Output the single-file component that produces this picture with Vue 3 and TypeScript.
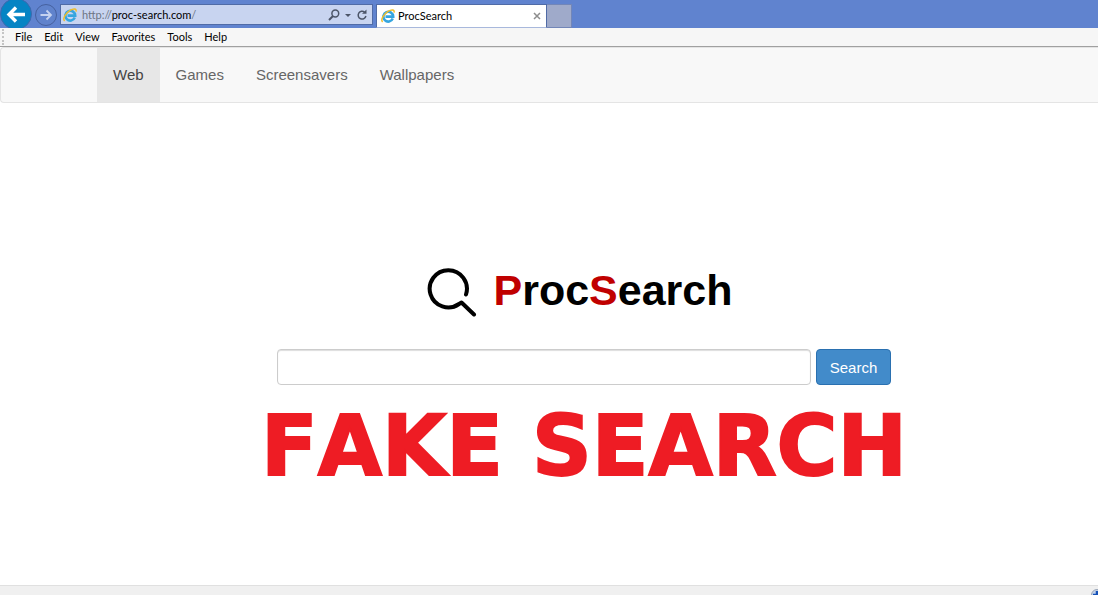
<script setup lang="ts">
import { ref } from 'vue'

const menus: string[] = ['File', 'Edit', 'View', 'Favorites', 'Tools', 'Help']
const links: string[] = ['Web', 'Games', 'Screensavers', 'Wallpapers']
const active = ref<string>('Web')
const query = ref<string>('')
</script>

<template>
  <div class="browser">
    <svg class="defs" aria-hidden="true">
      <symbol id="ie-logo" viewBox="0 0 14 14">
        <path d="M11.8 9.6A4.900 4.900 0 1 1 12.200 7.600H4.500" fill="none" stroke="#35a5df" stroke-width="2.600" />
        <path d="M1.600 13C-.8 10.800 2.800 5.100 7 2.400 10.400.3 13.800.2 13 3.600" fill="none" stroke="#efbd2b" stroke-width="1.500" />
      </symbol>
    </svg>

    <header class="titlebar">
      <button class="back" aria-label="Back">
        <svg viewBox="0 0 32 32" width="32" height="32">
          <circle cx="16" cy="14" r="15.500" fill="#0584c4" stroke="#3f68ad" />
          <path d="M25 14.500H9M16 7.500l-7 7 7 7" fill="none" stroke="#fff" stroke-width="3.400" />
        </svg>
      </button>
      <button class="forward" aria-label="Forward">
        <svg viewBox="0 0 24 24" width="24" height="24">
          <circle cx="12" cy="12" r="10.500" fill="#6083cc" stroke="#46619f" />
          <path d="M6.500 12H17M12.500 7.500L17 12l-4.500 4.500" fill="none" stroke="#c5d3f0" stroke-width="1.800" />
        </svg>
      </button>
      <div class="address">
        <svg class="ie" width="14" height="14"><use href="#ie-logo" /></svg>
        <span class="url">http://<b>proc-search.com</b>/</span>
        <button aria-label="Search the address">
          <svg viewBox="0 0 12 12" width="12" height="12"><circle cx="7.300" cy="4.500" r="3.400" /><path d="M5 7L1 11" stroke-width="2" /></svg>
        </button>
        <button aria-label="Show addresses">
          <svg viewBox="0 0 6 12" width="6" height="12"><path d="M0 5h6L3 8z" class="solid" /></svg>
        </button>
        <button aria-label="Refresh">
          <svg viewBox="0 0 12 12" width="12" height="12"><path d="M8.600 3.200A3.900 3.900 0 1 0 9.900 7" /><path d="M6 4.800h4.500V.4z" class="solid" /></svg>
        </button>
      </div>
      <div class="tab">
        <svg class="ie" width="14" height="14"><use href="#ie-logo" /></svg>
        <span class="tab-title">ProcSearch</span>
        <button aria-label="Close tab">
          <svg viewBox="0 0 8 8" width="8" height="8"><path d="M1 1l6 6M7 1L1 7" stroke="#8d8d8d" stroke-width="1.500" /></svg>
        </button>
      </div>
      <button class="new-tab" aria-label="New tab"></button>
    </header>

    <nav class="menubar" aria-label="Menu bar">
      <span class="grip"></span>
      <button v-for="menu in menus" :key="menu">{{ menu }}</button>
    </nav>

    <nav class="sitenav" aria-label="Site">
      <a v-for="link in links" :key="link" href="#" :class="{ active: link === active }" @click.prevent="active = link">{{ link }}</a>
    </nav>

    <main class="content">
      <h1 class="logo">
        <svg viewBox="0 0 50 50" width="50" height="50" aria-hidden="true">
          <path d="M39 26.500A18.600 18.600 0 1 0 32 36L34.500 34.500L47 46.500" fill="none" stroke="#000" stroke-width="4" stroke-linecap="round" stroke-linejoin="round" />
        </svg>
        <span><em>P</em>roc<em>S</em>earch</span>
      </h1>
      <form class="search" @submit.prevent>
        <input v-model="query" type="text" aria-label="Search query" />
        <button type="submit">Search</button>
      </form>
      <p class="headline">FAKE SEARCH</p>
    </main>

    <footer class="statusbar">
      <svg viewBox="0 0 12 12" width="12" height="12" aria-hidden="true">
        <circle cx="6" cy="6" r="5.500" fill="#c3d2e8" stroke="#9aa6b8" />
        <path d="M6 2v8M2 6h8" stroke="#1551b8" stroke-width="2.500" />
      </svg>
    </footer>
  </div>
</template>

<style>
body {
  margin: 0;
  background: #fff;
}
</style>

<style scoped>
.browser {
  display: flex;
  flex-direction: column;
  height: 100vh;
  overflow: hidden;
  font-family: "Liberation Sans", Arial, sans-serif;
}
.browser * {
  box-sizing: border-box;
}
.defs {
  position: absolute;
  width: 0;
  height: 0;
}
svg {
  display: block;
  flex: none;
}
button {
  padding: 0;
  border: 0;
  background: none;
  font: inherit;
  color: inherit;
}
.titlebar {
  display: flex;
  align-items: flex-end;
  flex: none;
  height: 28px;
  overflow: hidden;
  background: #6083cf;
  font: 11px/20px Lato, "Open Sans", sans-serif;
}
.back {
  height: 28px;
  overflow: hidden;
}
.forward {
  width: 28px;
  height: 26px;
  padding-left: 2px;
}
.address {
  display: flex;
  align-items: center;
  gap: 5px;
  width: 313px;
  height: 21px;
  margin-bottom: 3px;
  padding: 0 4px 0 2px;
  border: 1px solid #506ba6;
  background: #c8d4f0;
}
.address button svg {
  fill: none;
  stroke: #4c5568;
  stroke-width: 1.5;
}
.address .solid {
  fill: #4c5568;
  stroke: none;
}
.url {
  flex: 1;
  color: #6c7484;
}
.url b {
  font-weight: 400;
  color: #000;
}
.tab {
  display: flex;
  align-items: center;
  gap: 3px;
  width: 171px;
  height: 24px;
  margin-left: 3px;
  padding: 0 5px 0 4px;
  border: 1px solid #506ba6;
  border-bottom-color: #a8b8dc;
  background: #fff;
}
.tab-title {
  flex: 1;
}
.new-tab {
  width: 25px;
  height: 24px;
  border: 1px solid #7286b8;
  border-left: 0;
  background: #9faaca;
}
.menubar {
  display: flex;
  align-items: center;
  gap: 12px;
  flex: none;
  height: 19px;
  padding-left: 2px;
  border-bottom: 1px solid #a0a0a0;
  background: #f6f6f6;
  font: 11px/18px Lato, "Open Sans", sans-serif;
}
.grip {
  width: 0;
  height: 16px;
  margin-right: -1px;
  border-left: 2px dotted #c4c4c4;
}
.sitenav {
  display: flex;
  flex: none;
  height: 56px;
  padding-left: 96px;
  border: 1px solid #e4e4e4;
  border-right: 0;
  border-radius: 4px 0 0 4px;
  background: #f8f8f8;
}
.sitenav a {
  padding: 0 16px;
  color: #666;
  font-size: 15px;
  line-height: 54px;
  text-decoration: none;
}
.sitenav a.active {
  background: #e7e7e7;
  color: #444;
}
.content {
  display: flex;
  flex-direction: column;
  align-items: center;
  flex: 1;
  padding: 165px 0 0 70px;
}
.logo {
  display: flex;
  align-items: flex-start;
  gap: 16px;
  margin: 0 8px 0 0;
  font-size: 43px;
  line-height: 44px;
}
.logo em {
  font-style: normal;
  color: #c00000;
}
.search {
  display: flex;
  gap: 5px;
  width: 614px;
  max-width: 100%;
  margin-top: 31px;
}
.search input {
  flex: 1;
  min-width: 0;
  height: 36px;
  padding: 0 12px;
  border: 1px solid #ccc;
  border-radius: 4px;
  outline: 0;
  background: #fff;
  box-shadow: inset 0 1px 1px #ddd;
  font: 15px "Liberation Sans", Arial, sans-serif;
}
.search button {
  width: 75px;
  height: 36px;
  border: 1px solid #2a70b0;
  border-radius: 4px;
  background: #428bca;
  color: #fff;
  font-size: 15px;
}
.headline {
  margin: 12px 0 0;
  color: #ee1c24;
  font: 700 83px/100px "DejaVu Sans", sans-serif;
  font-kerning: none;
  -webkit-text-stroke: 2px #ee1c24;
  white-space: nowrap;
}
.statusbar {
  display: flex;
  justify-content: flex-end;
  flex: none;
  height: 10px;
  padding-top: 3px;
  overflow: hidden;
  border-top: 1px solid #e0e0e0;
  background: #f0f0f0;
}
.statusbar svg {
  margin-right: -5px;
}
</style>
